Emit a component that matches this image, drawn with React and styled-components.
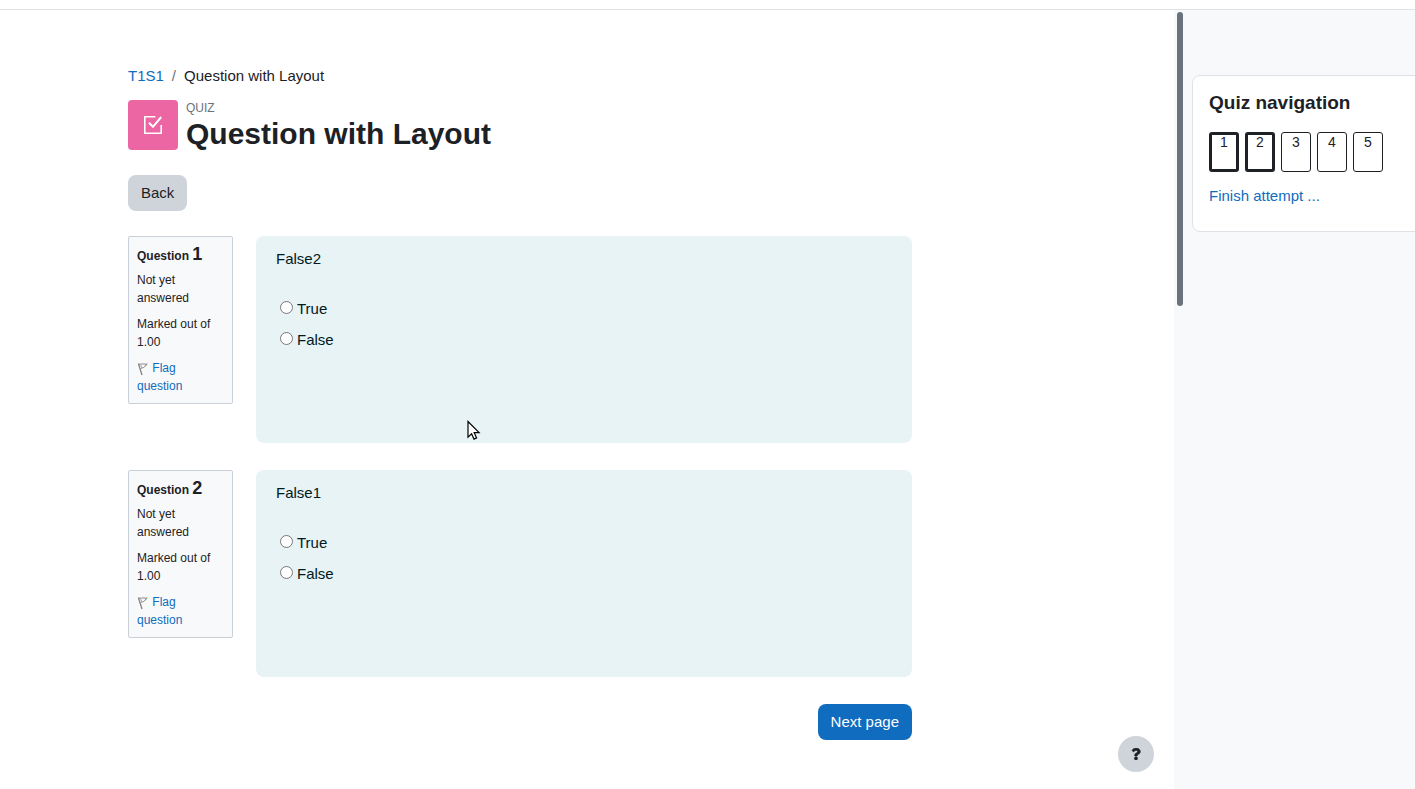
import React from 'react'
import styled, { createGlobalStyle } from 'styled-components'
import { FaQuestion } from 'react-icons/fa'

const questions = [
  { number: 1, text: 'False2', pointer: true },
  { number: 2, text: 'False1' },
]

const navItems = [1, 2, 3, 4, 5]

function QuizIcon() {
  return (
    <svg width="20" height="20" viewBox="0 0 20 20" fill="none" stroke="#fff" strokeWidth="1.6" aria-hidden="true">
      <path d="M12.4 1.8H1.8v16.4h16.4V10" />
      <path d="M6 7.8l4 4L18.2 2" strokeWidth="2" />
    </svg>
  )
}

function FlagIcon() {
  return (
    <svg width="12" height="14" viewBox="0 0 12 14" fill="none" stroke="#808080" aria-hidden="true">
      <path d="M1.4 1.6L5 13" strokeWidth="1.3" />
      <path d="M1.6 2c2 .8 3.600-.6 5 0 1 .3 2.200.3 3.600 0C8.600 3.200 7.800 5.200 6.400 5.600 5.200 5.800 4.200 6 3.400 7.200" />
      <path d="M3.800 3.200l.8 2.200" strokeWidth="0.8" />
    </svg>
  )
}

function Pointer() {
  return (
    <PointerIcon width="14" height="22" viewBox="0 0 14 22" aria-hidden="true">
      <path
        d="M1 1.5v15.6l3.6-3.4 2.4 5.4 2.6-1.2-2.4-5.2h4.9z"
        fill="#fff"
        stroke="#000"
        strokeWidth="1.2"
      />
    </PointerIcon>
  )
}

function Question({ number, text, pointer }) {
  const name = `q${number}`
  return (
    <QuestionRow>
      <Info>
        <InfoTitle>Question <span>{number}</span></InfoTitle>
        <p>Not yet answered</p>
        <p>Marked out of 1.00</p>
        <p><a href="#flag"><FlagIcon /> Flag question</a></p>
      </Info>
      <Formulation>
        <p>{text}</p>
        <Answers>
          <Option>
            <input type="radio" name={name} id={`${name}-true`} />
            <label htmlFor={`${name}-true`}>True</label>
          </Option>
          <Option>
            <input type="radio" name={name} id={`${name}-false`} />
            <label htmlFor={`${name}-false`}>False</label>
          </Option>
        </Answers>
        {pointer && <Pointer />}
      </Formulation>
    </QuestionRow>
  )
}

function App() {
  return (
    <Page>
      <GlobalStyle />
      <TopBar />
      <Body>
        <Main>
          <Content>
            <Breadcrumb>
              <a href="#course">T1S1</a>
              <Slash>/</Slash>
              <span>Question with Layout</span>
            </Breadcrumb>
            <Header>
              <Badge><QuizIcon /></Badge>
              <div>
                <Kind>QUIZ</Kind>
                <h1>Question with Layout</h1>
              </div>
            </Header>
            <Button type="button">Back</Button>
            <Questions>
              {questions.map((q) => <Question key={q.number} {...q} />)}
            </Questions>
            <Footer>
              <Button type="button" $primary>Next page</Button>
            </Footer>
          </Content>
          <HelpButton type="button" aria-label="Help"><FaQuestion /></HelpButton>
        </Main>
        <Drawer>
          <ScrollThumb />
          <NavCard>
            <h2>Quiz navigation</h2>
            <NavList>
              {navItems.map((n) => (
                <NavLink key={n} href={`#question-${n}`} $current={n < 3}>{n}</NavLink>
              ))}
            </NavList>
            <a href="#finish">Finish attempt ...</a>
          </NavCard>
        </Drawer>
      </Body>
    </Page>
  )
}

export default App

const GlobalStyle = createGlobalStyle`
  * {
    box-sizing: border-box;
  }
  body {
    margin: 0;
    background: #fff;
    color: #1d2125;
    font-family: "Liberation Sans", Arial, sans-serif;
    font-size: 15px;
    line-height: 22px;
  }
  h1, h2, h3, p {
    margin: 0;
  }
  a {
    color: #0f6cbf;
    text-decoration: none;
  }
`

const Page = styled.div`
  display: flex;
  flex-direction: column;
  min-height: 100vh;
`

const TopBar = styled.header`
  height: 10px;
  border-bottom: 1px solid #dee2e6;
`

const Body = styled.div`
  display: flex;
  flex: 1;
`

const Main = styled.main`
  position: relative;
  flex: 1;
  min-width: 0;
  padding: 55px 24px 40px 128px;
`

const Content = styled.div`
  max-width: 784px;
`

const Breadcrumb = styled.nav`
  display: flex;
  gap: 8px;
`

const Slash = styled.span`
  color: #6a737b;
`

const Header = styled.div`
  display: flex;
  gap: 8px;
  margin: 13px 0 23px;

  h1 {
    font-size: 30px;
    line-height: 36px;
  }
`

const Badge = styled.div`
  display: flex;
  align-items: center;
  justify-content: center;
  width: 50px;
  height: 50px;
  border-radius: 4px;
  background: #eb66a2;
`

const Kind = styled.div`
  color: #6a737b;
  font-size: 12px;
  line-height: 16px;
`

const Button = styled.button`
  display: block;
  padding: 7px 13px;
  border: 0;
  border-radius: 8px;
  background: ${({ $primary }) => ($primary ? '#0f6cbf' : '#ced4da')};
  color: ${({ $primary }) => ($primary ? '#fff' : '#1d2125')};
  font: inherit;
  cursor: pointer;
`

const Questions = styled.div`
  display: flex;
  flex-direction: column;
  gap: 27px;
  margin: 25px 0 27px;
`

const QuestionRow = styled.section`
  display: flex;
  align-items: flex-start;
  gap: 23px;
`

const Info = styled.div`
  display: flex;
  flex-direction: column;
  gap: 8px;
  flex: 0 0 105px;
  padding: 8px;
  border: 1px solid #cad0d7;
  border-radius: 2px;
  background: #f8f9fa;
  font-size: 12px;
  line-height: 18px;

  svg {
    vertical-align: -4px;
  }
`

const InfoTitle = styled.h3`
  height: 18px;
  font-size: 12px;
  line-height: 18px;

  span {
    font-size: 18px;
  }
`

const Formulation = styled.div`
  position: relative;
  flex: 1;
  padding: 12px 20px 88px;
  border-radius: 8px;
  background: #e7f3f5;
  color: #001a1e;
`

const Answers = styled.div`
  margin-top: 23px;
`

const Option = styled.div`
  display: flex;
  align-items: center;
  gap: 4px;
  height: 31px;

  input {
    width: 13px;
    height: 13px;
    margin: 0 0 2px 4px;
  }
`

const PointerIcon = styled.svg`
  position: absolute;
  top: 184px;
  left: 211px;
  pointer-events: none;
`

const Footer = styled.div`
  display: flex;
  justify-content: flex-end;
`

const HelpButton = styled.button`
  position: absolute;
  right: 20px;
  bottom: 17px;
  display: flex;
  align-items: center;
  justify-content: center;
  width: 36px;
  height: 36px;
  padding: 0;
  border: 0;
  border-radius: 50%;
  background: #ced4da;
  color: #1d2125;
  font-size: 12px;
  cursor: pointer;

  svg {
    stroke-width: 24px;
  }
`

const Drawer = styled.aside`
  display: flex;
  align-items: flex-start;
  flex: 0 0 241px;
  overflow: hidden;
  padding: 2px 0 0 3px;
  background: #f8f9fa;
`

const ScrollThumb = styled.div`
  flex: 0 0 6px;
  height: 294px;
  border-radius: 3px;
  background: #6a737b;
`

const NavCard = styled.section`
  flex: 0 0 280px;
  margin: 63px 0 0 9px;
  padding: 16px 16px 24px;
  border: 1px solid #dee2e6;
  border-radius: 8px;
  background: #fff;

  h2 {
    font-size: 19px;
    line-height: 22px;
  }
`

const NavList = styled.div`
  display: flex;
  gap: 6px;
  margin: 18px 0 13px;
`

const NavLink = styled.a`
  width: 30px;
  height: 40px;
  border: ${({ $current }) => ($current ? 3 : 1)}px solid #1d2125;
  border-radius: 3px;
  padding-top: ${({ $current }) => ($current ? 0 : 2)}px;
  color: #1d2125;
  font-size: 14px;
  line-height: 14px;
  text-align: center;
`
